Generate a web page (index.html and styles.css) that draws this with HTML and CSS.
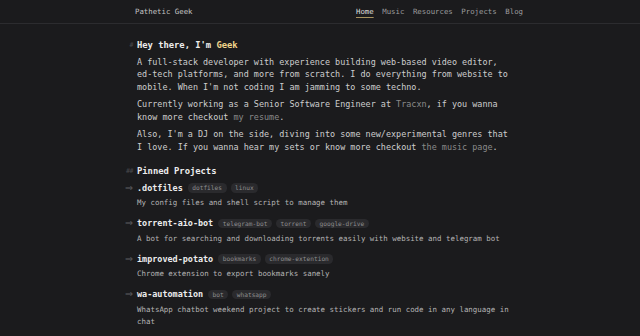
FILE: index.html
```html
<!DOCTYPE html>
<html lang="en">
<head>
<meta charset="utf-8">
<title>Pathetic Geek</title>
<link rel="stylesheet" href="styles.css">
</head>
<body>
<header class="site-header">
  <div class="header-inner">
    <a class="logo" href="#">Pathetic Geek</a>
    <nav class="nav">
      <a class="nav-link active" href="#">Home</a>
      <a class="nav-link" href="#">Music</a>
      <a class="nav-link" href="#">Resources</a>
      <a class="nav-link" href="#">Projects</a>
      <a class="nav-link" href="#">Blog</a>
    </nav>
  </div>
</header>
<main class="content">
  <h1 class="heading"><span class="marker">#</span>Hey there, I'm <span class="accent">Geek</span></h1>
  <p class="para">A full-stack developer with experience building web-based video editor, ed-tech platforms, and more from scratch. I do everything from website to mobile. When I'm not coding I am jamming to some techno.</p>
  <p class="para">Currently working as a Senior Software Engineer at <a class="link" href="#">Tracxn</a>, if you wanna know more checkout <a class="link" href="#">my resume</a>.</p>
  <p class="para">Also, I'm a DJ on the side, diving into some new/experimental genres that I love. If you wanna hear my sets or know more checkout <a class="link" href="#">the music page</a>.</p>

  <h2 class="heading section"><span class="marker">##</span>Pinned Projects</h2>
  <ul class="projects">
    <li class="project">
      <div class="project-title"><span class="arrow">⇒</span><span class="name">.dotfiles</span><span class="tags"><span class="tag">dotfiles</span><span class="tag">linux</span></span></div>
      <p class="desc">My config files and shell script to manage them</p>
    </li>
    <li class="project">
      <div class="project-title"><span class="arrow">⇒</span><span class="name">torrent-aio-bot</span><span class="tags"><span class="tag">telegram-bot</span><span class="tag">torrent</span><span class="tag">google-drive</span></span></div>
      <p class="desc">A bot for searching and downloading torrents easily with website and telegram bot</p>
    </li>
    <li class="project">
      <div class="project-title"><span class="arrow">⇒</span><span class="name">improved-potato</span><span class="tags"><span class="tag">bookmarks</span><span class="tag">chrome-extention</span></span></div>
      <p class="desc">Chrome extension to export bookmarks sanely</p>
    </li>
    <li class="project">
      <div class="project-title"><span class="arrow">⇒</span><span class="name">wa-automation</span><span class="tags"><span class="tag">bot</span><span class="tag">whatsapp</span></span></div>
      <p class="desc">WhatsApp chatbot weekend project to create stickers and run code in any language in chat</p>
    </li>
    <li class="project">
      <div class="project-title"><span class="arrow">⇒</span><span class="name">moodboard</span><span class="tags"><span class="tag">react</span><span class="tag">nodejs</span></span></div>
      <p class="desc">A simple moodboard app</p>
    </li>
  </ul>
</main>
</body>
</html>
```
FILE: styles.css
```css
* { box-sizing: border-box; }
html, body { margin: 0; padding: 0; }
body {
  background: #1b1b1d;
  color: #cdcdcd;
  font-family: "DejaVu Sans Mono", "Liberation Mono", monospace;
  overflow: hidden;
}
a { text-decoration: none; color: inherit; }

.site-header {
  height: 24px;
  border-bottom: 1px solid #2c2c2f;
}
.header-inner {
  margin-left: 135px;
  width: 388px;
  height: 23px;
  display: flex;
  align-items: center;
  justify-content: space-between;
  font-size: 7.35px;
  line-height: 10px;
}
.logo { color: #c4c4c4; }
.nav { display: flex; gap: 8.6px; }
.nav-link { color: #9d9d9d; }
.nav-link.active {
  color: #dcdcdc;
  text-decoration: underline;
  text-decoration-color: #a8925f;
  text-underline-offset: 2.5px;
  text-decoration-thickness: 1px;
}

.content {
  margin-left: 137px;
  width: 378px;
  padding-top: 14.75px;
}
.heading {
  position: relative;
  margin: 0;
  font-size: 8.8px;
  line-height: 12.5px;
  font-weight: bold;
  color: #ededed;
}
.marker {
  position: absolute;
  right: calc(100% + 4px);
  top: 0;
  color: #4a4a4d;
  font-weight: normal;
  font-size: 6.5px;
  letter-spacing: -0.4px;
}
.accent { color: #f1d58c; }

.para {
  margin: 4.5px 0 0;
  font-size: 8.45px;
  line-height: 12.5px;
}
.para + .para { margin-top: 5px; }
.link { color: #8a8a8a; }

.section { margin-top: 11.5px; }

.projects {
  list-style: none;
  margin: 4.25px 0 0;
  padding: 0;
}
.project { margin-bottom: 8px; }
.project-title {
  position: relative;
  display: flex;
  align-items: center;
  height: 12.5px;
}
.arrow {
  position: absolute;
  right: calc(100% + 4px);
  top: 0;
  font-family: "DejaVu Sans", sans-serif;
  font-size: 9.5px;
  line-height: 12.5px;
  color: #5e5e62;
}
.name {
  font-size: 8.45px;
  font-weight: bold;
  color: #ededed;
}
.tags {
  display: flex;
  gap: 4px;
  margin-left: 5px;
}
.tag {
  background: #2a2a2d;
  color: #8d8d8d;
  font-size: 6.2px;
  line-height: 9.5px;
  padding: 0 4.5px;
  border-radius: 4.5px;
}
.desc {
  margin: 3px 0 0;
  font-size: 7.45px;
  line-height: 12px;
  color: #b4b4b4;
}
```
